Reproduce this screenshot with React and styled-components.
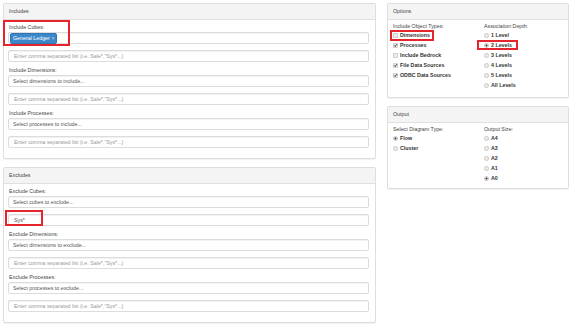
import React from 'react';
import styled, { createGlobalStyle } from 'styled-components';

const GlobalStyle = createGlobalStyle`
  body {
    margin: 0;
    background: #fff;
    font-family: "Liberation Sans", Arial, sans-serif;
    color: #333;
  }
`

const Page = styled.div`
  display: flex;
  gap: 11px;
  width: 573px;
  height: 325px;
  box-sizing: border-box;
  padding: 3px 4px 0 3px;
  font-size: 5.3px;
`

const Column = styled.div`
  display: flex;
  flex-direction: column;
  gap: 8px;
  width: ${p => p.$width}px;
  flex-shrink: 0;
`

const Panel = styled.section`
  border: 1px solid #dedede;
  border-radius: 2px;
  background: #fff;
  box-shadow: 0 1px 1px rgba(0, 0, 0, 0.06);
`

const PanelHeading = styled.div`
  height: 15px;
  line-height: 15px;
  padding: 0 5px;
  background: #f4f4f4;
  border-bottom: 1px solid #e0e0e0;
  border-radius: 2px 2px 0 0;
  color: #444;
`

const FormBody = styled.div`
  display: flex;
  flex-direction: column;
  gap: 4px;
  padding: 3px 6px 10px 4px;
`

const FieldGroup = styled.div`
  position: relative;
  display: flex;
  flex-direction: column;
`

const FieldLabel = styled.div`
  line-height: 9px;
  padding-left: 1px;
  color: #444;
`

const SelectBox = styled.div`
  height: 12px;
  box-sizing: border-box;
  display: flex;
  align-items: center;
  padding: 0 ${p => (p.$tags ? 1 : 4)}px;
  border: 1px solid #dcdcdc;
  border-radius: 2px;
  background: #fff;
  color: #555;
  box-shadow: inset 0 1px 1px rgba(0, 0, 0, 0.05);
`

const Tag = styled.span`
  height: 9px;
  line-height: 9px;
  padding: 0 2px;
  border-radius: 2px;
  background: #3c87c9;
  border: 1px solid #2f77b6;
  color: #fff;

  & small {
    font-size: 4.5px;
    margin-left: 2px;
    color: #cfe2f3;
  }
`

const InputWrap = styled.div`
  position: relative;
  margin-top: 6px;
`

const TextInput = styled.input`
  display: block;
  width: 100%;
  height: 12px;
  box-sizing: border-box;
  margin: 0;
  padding: 0 5px;
  border: 1px solid #dcdcdc;
  border-radius: 2px;
  background: #fff;
  font: inherit;
  font-size: 5.3px;
  color: #555;
  box-shadow: inset 0 1px 1px rgba(0, 0, 0, 0.06);
  outline: none;

  &::placeholder {
    color: #999;
  }
`

const Highlight = styled.span`
  position: absolute;
  left: ${p => p.$left}px;
  top: ${p => p.$top}px;
  width: ${p => p.$w}px;
  height: ${p => p.$h}px;
  box-sizing: border-box;
  border: 2px solid #e4262c;
  pointer-events: none;
`

const OptionsBody = styled.div`
  display: grid;
  grid-template-columns: 91px 1fr;
  padding: 3px 6px ${p => p.$bottom}px 5px;
`

const OptionColumn = styled.div`
  display: flex;
  flex-direction: column;
`

const OptionLabel = styled.div`
  line-height: 7px;
  color: #444;
`

const OptionItem = styled.div`
  position: relative;
  display: flex;
  align-items: center;
  gap: 2px;
  height: 10px;
  font-weight: bold;
  color: #333;
`

const CheckIcon = ({ checked }) => (
  <svg width="5" height="5" viewBox="0 0 5 5">
    <rect x="0.4" y="0.4" width="4.2" height="4.2" rx="0.6" fill="#ececec" stroke="#b0b0b0" strokeWidth="0.6" />
    {checked && <path d="M1.1 2.5 L2.1 3.5 L3.9 1.2" fill="none" stroke="#222" strokeWidth="0.9" />}
  </svg>
)

const RadioIcon = ({ checked }) => (
  <svg width="5" height="5" viewBox="0 0 5 5">
    <circle cx="2.5" cy="2.5" r="2.1" fill="#ececec" stroke="#b0b0b0" strokeWidth="0.6" />
    {checked && <circle cx="2.5" cy="2.5" r="1" fill="#333" />}
  </svg>
)

const PLACEHOLDER = 'Enter comma separated list (i.e. Sale*,"Sys*...)'

const includeFields = [
  { label: 'Include Cubes:', tag: 'General Ledger', highlight: true },
  { label: 'Include Dimensions:', select: 'Select dimensions to include...' },
  { label: 'Include Processes:', select: 'Select processes to include...' },
]

const excludeFields = [
  { label: 'Exclude Cubes:', select: 'Select cubes to exclude...', value: 'Sys*' },
  { label: 'Exclude Dimensions:', select: 'Select dimensions to exclude...' },
  { label: 'Exclude Processes:', select: 'Select processes to exclude...' },
]

const objectTypes = [
  { name: 'Dimensions', checked: false, highlight: true },
  { name: 'Processes', checked: true },
  { name: 'Include Bedrock', checked: false },
  { name: 'File Data Sources', checked: true },
  { name: 'ODBC Data Sources', checked: true },
]

const depths = ['1 Level', '2 Levels', '3 Levels', '4 Levels', '5 Levels', 'All Levels']
const sizes = ['A4', 'A3', 'A2', 'A1', 'A0']

const Field = ({ field }) => (
  <FieldGroup>
    {field.highlight && <Highlight $left={-5} $top={-3} $w={67} $h={26} />}
    <FieldLabel>{field.label}</FieldLabel>
    {field.tag ? (
      <SelectBox $tags>
        <Tag>{field.tag}<small>×</small></Tag>
      </SelectBox>
    ) : (
      <SelectBox>{field.select}</SelectBox>
    )}
    <InputWrap>
      {field.value && <Highlight $left={-3} $top={-4} $w={38} $h={16} />}
      <TextInput placeholder={PLACEHOLDER} defaultValue={field.value} readOnly />
    </InputWrap>
  </FieldGroup>
)

const App = () => {
  return (
    <>
      <GlobalStyle />
      <Page>
        <Column $width={373}>
          <Panel>
            <PanelHeading>Includes</PanelHeading>
            <FormBody>
              {includeFields.map(f => <Field key={f.label} field={f} />)}
            </FormBody>
          </Panel>
          <Panel>
            <PanelHeading>Excludes</PanelHeading>
            <FormBody>
              {excludeFields.map(f => <Field key={f.label} field={f} />)}
            </FormBody>
          </Panel>
        </Column>

        <Column $width={182}>
          <Panel>
            <PanelHeading>Options</PanelHeading>
            <OptionsBody $bottom={7}>
              <OptionColumn>
                <OptionLabel>Include Object Types:</OptionLabel>
                {objectTypes.map(t => (
                  <OptionItem key={t.name}>
                    {t.highlight && <Highlight $left={-3} $top={0} $w={44} $h={11} />}
                    <CheckIcon checked={t.checked} />
                    {t.name}
                  </OptionItem>
                ))}
              </OptionColumn>
              <OptionColumn>
                <OptionLabel>Association Depth:</OptionLabel>
                {depths.map(d => (
                  <OptionItem key={d}>
                    {d === '2 Levels' && <Highlight $left={-7} $top={0} $w={41} $h={10} />}
                    <RadioIcon checked={d === '2 Levels'} />
                    {d}
                  </OptionItem>
                ))}
              </OptionColumn>
            </OptionsBody>
          </Panel>
          <Panel>
            <PanelHeading>Output</PanelHeading>
            <OptionsBody $bottom={5}>
              <OptionColumn>
                <OptionLabel>Select Diagram Type:</OptionLabel>
                <OptionItem><RadioIcon checked />Flow</OptionItem>
                <OptionItem><RadioIcon />Cluster</OptionItem>
              </OptionColumn>
              <OptionColumn>
                <OptionLabel>Output Size:</OptionLabel>
                {sizes.map(s => (
                  <OptionItem key={s}>
                    <RadioIcon checked={s === 'A0'} />
                    {s}
                  </OptionItem>
                ))}
              </OptionColumn>
            </OptionsBody>
          </Panel>
        </Column>
      </Page>
    </>
  );
}

export default App;
